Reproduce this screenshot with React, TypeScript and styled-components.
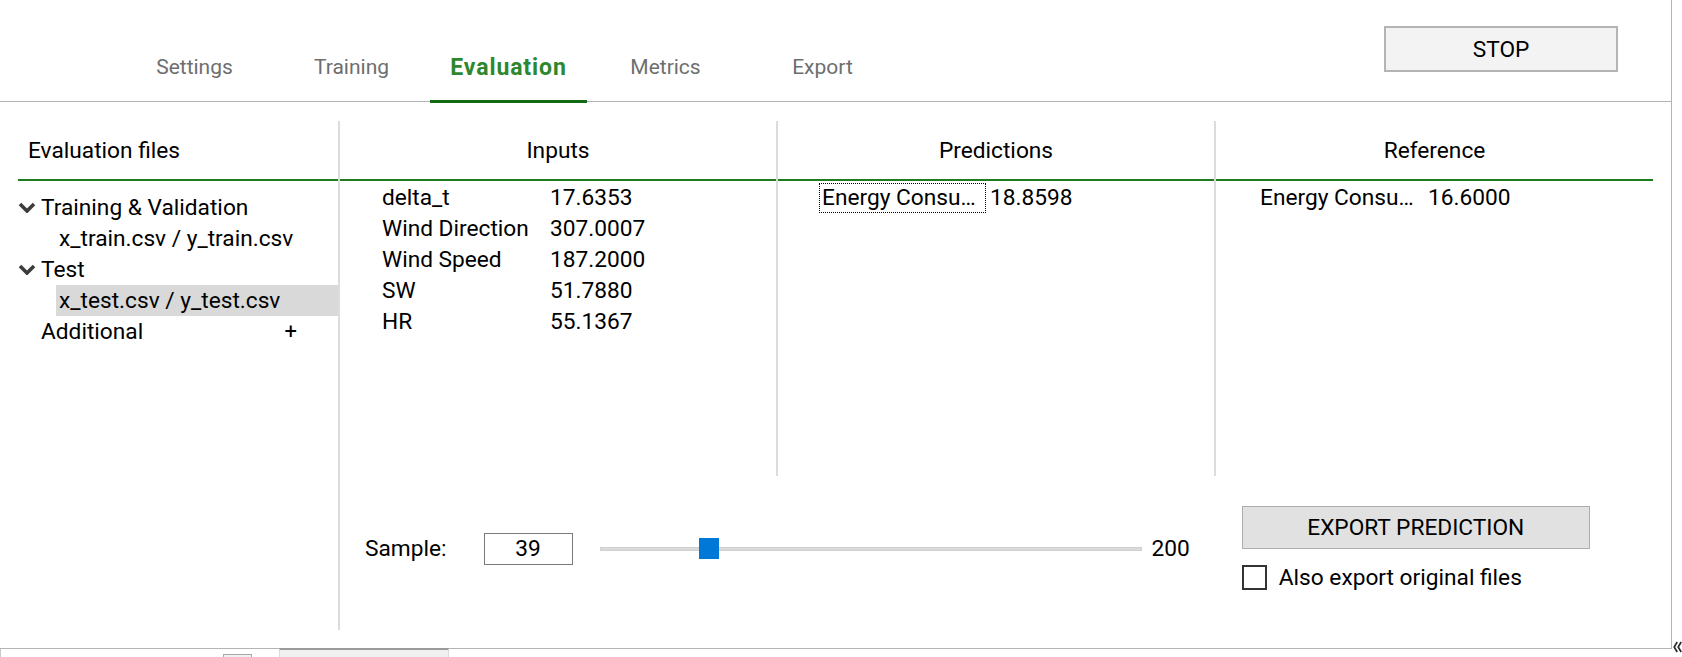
import React from "react";
import styled, { createGlobalStyle } from "styled-components";

const TABS = ["Settings", "Training", "Evaluation", "Metrics", "Export"];
const ACTIVE_TAB = "Evaluation";

const INPUTS = [
  { name: "delta_t", value: "17.6353" },
  { name: "Wind Direction", value: "307.0007" },
  { name: "Wind Speed", value: "187.2000" },
  { name: "SW", value: "51.7880" },
  { name: "HR", value: "55.1367" },
];

const SAMPLE = { value: 39, min: 1, max: 200 };
const SLIDER_WIDTH = 542;
const THUMB_SIZE = 21;

const GlobalStyle = createGlobalStyle`
  html, body {
    margin: 0;
    padding: 0;
    background: #ffffff;
  }
  body {
    font-family: Roboto, "Liberation Sans", sans-serif;
    color: #000000;
    overflow: hidden;
  }
  * {
    box-sizing: border-box;
  }
`;

const Chevron = () => (
  <svg width="18" height="11" viewBox="0 0 18 11">
    <polyline
      points="2,2 9,9 16,2"
      fill="none"
      stroke="#3c3c3c"
      strokeWidth="3.6"
      strokeLinejoin="miter"
    />
  </svg>
);

const CollapseGlyph = () => (
  <svg width="9" height="12" viewBox="0 0 9 12">
    <polyline points="4.2,1 1.2,6 4.2,11" fill="none" stroke="#2b2b2b" strokeWidth="1.7" />
    <polyline points="8.2,1 5.2,6 8.2,11" fill="none" stroke="#2b2b2b" strokeWidth="1.7" />
  </svg>
);

const App: React.FC = () => {
  const thumbLeft =
    ((SAMPLE.value - SAMPLE.min) / (SAMPLE.max - SAMPLE.min)) *
    (SLIDER_WIDTH - THUMB_SIZE);

  return (
    <>
      <GlobalStyle />
      <Page>
        <Frame>
          <Header>
            <TabBar>
              {TABS.map((tab) => (
                <Tab key={tab} $active={tab === ACTIVE_TAB}>
                  {tab}
                </Tab>
              ))}
            </TabBar>
            <StopButton>STOP</StopButton>
          </Header>

          <Body>
            <FilesPanel>
              <PanelHeader>Evaluation files</PanelHeader>
              <Tree>
                <TreeRow $level={0}>
                  <Chevron />
                  <span>Training &amp; Validation</span>
                </TreeRow>
                <TreeRow $level={1}>x_train.csv / y_train.csv</TreeRow>
                <TreeRow $level={0}>
                  <Chevron />
                  <span>Test</span>
                </TreeRow>
                <TreeRow $level={1} $selected>
                  x_test.csv / y_test.csv
                </TreeRow>
                <TreeRow $level={0} $leaf>
                  <span>Additional</span>
                  <AddSign>+</AddSign>
                </TreeRow>
              </Tree>
            </FilesPanel>

            <ResultArea>
              <Columns>
                <Column>
                  <ColumnHeader>Inputs</ColumnHeader>
                  <ColumnBody $inset={39}>
                    {INPUTS.map((row) => (
                      <DataRow key={row.name}>
                        <NameCell>{row.name}</NameCell>
                        <ValueCell>{row.value}</ValueCell>
                      </DataRow>
                    ))}
                  </ColumnBody>
                </Column>
                <Column>
                  <ColumnHeader>Predictions</ColumnHeader>
                  <ColumnBody $inset={41}>
                    <DataRow>
                      <NameCell $focused>Energy Consu…</NameCell>
                      <ValueCell>18.8598</ValueCell>
                    </DataRow>
                  </ColumnBody>
                </Column>
                <Column $last>
                  <ColumnHeader>Reference</ColumnHeader>
                  <ColumnBody $inset={41}>
                    <DataRow>
                      <NameCell>Energy Consu…</NameCell>
                      <ValueCell>16.6000</ValueCell>
                    </DataRow>
                  </ColumnBody>
                </Column>
              </Columns>

              <ControlRow>
                <SampleLabel>Sample:</SampleLabel>
                <NumberBox>{SAMPLE.value}</NumberBox>
                <Slider>
                  <Track />
                  <Thumb style={{ left: thumbLeft }} />
                </Slider>
                <MaxLabel>{SAMPLE.max}</MaxLabel>
                <ExportGroup>
                  <ExportButton>EXPORT PREDICTION</ExportButton>
                  <CheckRow>
                    <CheckBox />
                    <span>Also export original files</span>
                  </CheckRow>
                </ExportGroup>
              </ControlRow>
            </ResultArea>
          </Body>
        </Frame>

        <Gutter>
          <CollapseGlyph />
        </Gutter>

        <BottomStrip>
          <StripField>
            <StripButton />
          </StripField>
          <StripTab />
        </BottomStrip>
      </Page>
    </>
  );
};

const TEXT_SIZE = "22.7px";

const Page = styled.div`
  display: grid;
  grid-template-columns: 1672px 10px;
  grid-template-rows: 649px 8px;
  width: 1682px;
  height: 657px;
  overflow: hidden;
`;

const Frame = styled.div`
  grid-column: 1;
  grid-row: 1;
  display: flex;
  flex-direction: column;
  border-right: 1px solid #b4b4b4;
  border-bottom: 1px solid #b4b4b4;
`;

const Header = styled.header`
  display: flex;
  height: 102px;
  border-bottom: 1px solid #b4b4b4;
  flex-shrink: 0;
`;

const TabBar = styled.nav`
  display: flex;
  margin-left: 116px;
  height: 103px;
`;

const Tab = styled.div<{ $active?: boolean }>`
  display: flex;
  align-items: center;
  justify-content: center;
  width: 157px;
  padding-top: 34px;
  font-size: ${(p) => (p.$active ? "23px" : "21px")};
  letter-spacing: ${(p) => (p.$active ? "0.9px" : "0")};
  font-weight: ${(p) => (p.$active ? 700 : 400)};
  color: ${(p) => (p.$active ? "#2e872e" : "#6e6e6e")};
  border-bottom: 3px solid ${(p) => (p.$active ? "#126a12" : "transparent")};
`;

const StopButton = styled.button`
  margin: 26px 53px 0 auto;
  width: 234px;
  height: 46px;
  border: 2px solid #b4b4b4;
  background: #f3f3f3;
  font-family: inherit;
  font-size: ${TEXT_SIZE};
  color: #000000;
`;

const Body = styled.main`
  display: flex;
  flex: 1;
  padding: 19px 0 0 18px;
`;

const FilesPanel = styled.section`
  display: flex;
  flex-direction: column;
  width: 322px;
  height: 509px;
  border-right: 2px solid #dcdcdc;
`;

const PanelHeader = styled.div`
  display: flex;
  align-items: center;
  height: 60px;
  padding-left: 10px;
  border-bottom: 2px solid #1e7b1e;
  font-size: ${TEXT_SIZE};
`;

const Tree = styled.ul`
  list-style: none;
  margin: 0;
  padding: 11px 0 0;
`;

const TreeRow = styled.li<{ $level: number; $selected?: boolean; $leaf?: boolean }>`
  display: flex;
  align-items: center;
  gap: 5px;
  height: 31px;
  margin-left: ${(p) => (p.$level === 1 ? 38 : 0)}px;
  padding-left: ${(p) => (p.$level === 1 ? 3 : p.$leaf ? 23 : 0)}px;
  padding-right: ${(p) => (p.$leaf ? 41 : 0)}px;
  justify-content: ${(p) => (p.$leaf ? "space-between" : "flex-start")};
  background: ${(p) => (p.$selected ? "#d9d9d9" : "transparent")};
  font-size: ${TEXT_SIZE};
  white-space: nowrap;
`;

const AddSign = styled.span`
  font-size: 22px;
`;

const ResultArea = styled.section`
  display: flex;
  flex-direction: column;
  width: 1313px;
`;

const Columns = styled.div`
  display: flex;
  height: 355px;
`;

const Column = styled.div<{ $last?: boolean }>`
  display: flex;
  flex-direction: column;
  width: ${(p) => (p.$last ? 437 : 438)}px;
  border-right: ${(p) => (p.$last ? "none" : "2px solid #dcdcdc")};
`;

const ColumnHeader = styled.div`
  display: flex;
  align-items: center;
  justify-content: center;
  height: 60px;
  border-bottom: 2px solid #1e7b1e;
  font-size: ${TEXT_SIZE};
`;

const ColumnBody = styled.div<{ $inset: number }>`
  display: flex;
  flex-direction: column;
  padding: 1px 0 0 ${(p) => p.$inset}px;
`;

const DataRow = styled.div`
  display: flex;
  align-items: center;
  height: 31px;
  font-size: ${TEXT_SIZE};
`;

const NameCell = styled.div<{ $focused?: boolean }>`
  width: 167px;
  height: 30px;
  line-height: 28px;
  padding: 0 2px;
  border: 1px dotted ${(p) => (p.$focused ? "#000000" : "transparent")};
  white-space: nowrap;
`;

const ValueCell = styled.div`
  padding-left: 4px;
`;

const ControlRow = styled.div`
  display: flex;
  align-items: center;
  margin-top: 30px;
  padding-left: 25px;
  font-size: ${TEXT_SIZE};
`;

const SampleLabel = styled.span``;

const NumberBox = styled.div`
  display: flex;
  align-items: center;
  justify-content: center;
  margin-left: 37px;
  width: 89px;
  height: 32px;
  border: 1px solid #7a7a7a;
`;

const Slider = styled.div`
  position: relative;
  display: flex;
  align-items: center;
  margin-left: 27px;
  width: ${SLIDER_WIDTH}px;
  height: ${THUMB_SIZE}px;
`;

const Track = styled.div`
  width: 100%;
  height: 4px;
  background: #dadada;
  border: 1px solid #d0d0d0;
`;

const Thumb = styled.div`
  position: absolute;
  top: 0;
  width: ${THUMB_SIZE - 1}px;
  height: ${THUMB_SIZE}px;
  background: #0078d7;
`;

const MaxLabel = styled.span`
  margin-left: 10px;
`;

const ExportGroup = styled.div`
  display: flex;
  flex-direction: column;
  margin-left: 52px;
`;

const ExportButton = styled.button`
  width: 348px;
  height: 43px;
  border: 1px solid #adadad;
  background: #e1e1e1;
  font-family: inherit;
  font-size: ${TEXT_SIZE};
  color: #000000;
`;

const CheckRow = styled.label`
  display: flex;
  align-items: center;
  gap: 12px;
  margin-top: 15px;
`;

const CheckBox = styled.span`
  width: 25px;
  height: 25px;
  border: 2px solid #333333;
  background: #ffffff;
`;

const Gutter = styled.div`
  grid-column: 2;
  grid-row: 1 / 3;
  display: flex;
  align-items: flex-end;
  padding: 0 0 4px 1px;
`;

const BottomStrip = styled.div`
  grid-column: 1;
  grid-row: 2;
  display: flex;
`;

const StripField = styled.div`
  width: 279px;
  border-left: 1px solid #c8c8c8;
  padding: 5px 0 0 222px;
`;

const StripButton = styled.div`
  width: 29px;
  height: 10px;
  border: 1px solid #a8a8a8;
  background: #f0f0f0;
`;

const StripTab = styled.div`
  width: 170px;
  margin-top: -1px;
  border-top: 2px solid #9a9a9a;
  border-left: 1px solid #dadada;
  border-right: 1px solid #dadada;
  background: #f0f0f0;
`;

export default App;
